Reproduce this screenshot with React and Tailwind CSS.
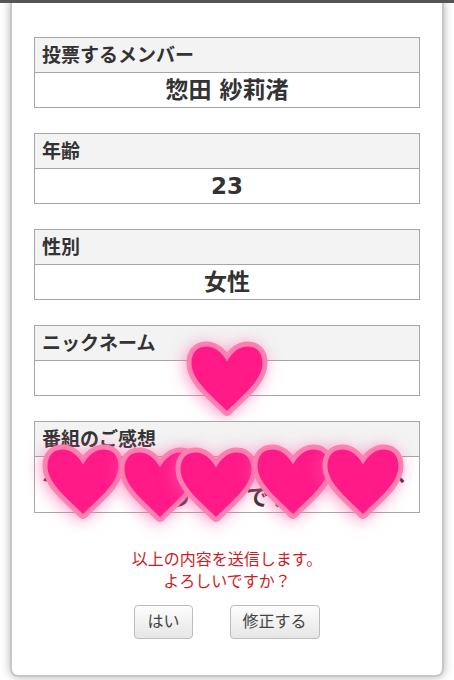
import React from 'react';

const HEART_PATH =
  'M41 20.5 C36 11 28 5.2 20 5.5 C10.5 5.8 5.5 12.5 5.5 22 C5.5 39 24 53 41 70 C58 53 76.5 39 76.5 22 C76.5 12.5 71.5 5.8 62 5.5 C54 5.2 46 11 41 20.5 Z';

const Heart = ({ className }) => (
  <svg
    viewBox="0 0 82 76"
    aria-hidden="true"
    className={`absolute w-[82px] h-[76px] overflow-visible drop-shadow-[-2px_2px_8px_rgba(255,90,170,0.6)] ${className}`}
  >
    <path d={HEART_PATH} fill="none" stroke="#ff80b0" strokeWidth="10" strokeLinejoin="round" />
    <path d={HEART_PATH} fill="#ff1a88" />
  </svg>
);

const Entry = ({ label, children, tall = false, hearts }) => (
  <div className="relative">
    <table className="w-full border-collapse border border-[#a6a6a6] font-bold text-[#333]">
      <tbody>
        <tr>
          <th
            scope="row"
            className="h-[35px] border border-[#a6a6a6] bg-[#f3f3f3] px-[7px] text-left text-[19px] leading-7"
          >
            {label}
          </th>
        </tr>
        <tr>
          <td
            className={`border border-[#a6a6a6] text-center text-[23px] ${
              tall ? 'h-14 pl-[7px] leading-6' : 'h-[35px] px-[7px] leading-8'
            }`}
          >
            {children}
          </td>
        </tr>
      </tbody>
    </table>
    {hearts}
  </div>
);

const FormButton = ({ type, children }) => (
  <button
    type={type}
    className="h-[34px] rounded border border-[#bdbdbd] bg-linear-to-b from-[#fdfdfd] to-[#e6e6e6] px-3 text-base text-[#444]"
  >
    {children}
  </button>
);

const App = () => (
  <div
    lang="ja"
    className="min-h-screen overflow-hidden border-t-[3px] border-[#555] bg-white px-3 pb-[5px] font-['DejaVu_Sans','Noto_Sans_CJK_JP',sans-serif]"
  >
    <form
      onSubmit={(e) => e.preventDefault()}
      className="rounded-b-md bg-white px-[22px] pt-[34px] pb-9 shadow-[0_0_0_2px_#c8c8c8,0_0_10px_2px_rgba(0,0,0,0.3)]"
    >
      <div className="flex flex-col gap-[25px]">
        <Entry label="投票するメンバー">惣田 紗莉渚</Entry>
        <Entry label="年齢">23</Entry>
        <Entry label="性別">女性</Entry>
        <Entry
          label="ニックネーム"
          hearts={<Heart className="left-1/2 top-4 -translate-x-1/2" />}
        />
        <Entry
          label="番組のご感想"
          tall
          hearts={
            <>
              <Heart className="left-2 top-[23px]" />
              <Heart className="left-[85px] top-[26px]" />
              <Heart className="left-[141px] top-[26px]" />
              <Heart className="left-[218px] top-[23px]" />
              <Heart className="left-[288px] top-[23px]" />
            </>
          }
        >
          <div className="flex justify-between">
            <span>ハ</span>
            <span>、</span>
          </div>
          <div>う　　 です</div>
        </Entry>
      </div>

      <p className="mt-9 text-center text-base leading-[22px] text-[#d01c24]">
        以上の内容を送信します。
        <br />
        よろしいですか？
      </p>
      <div className="mt-3 flex justify-center gap-[37px]">
        <FormButton type="submit">はい</FormButton>
        <FormButton type="button">修正する</FormButton>
      </div>
    </form>
  </div>
);

export default App;
